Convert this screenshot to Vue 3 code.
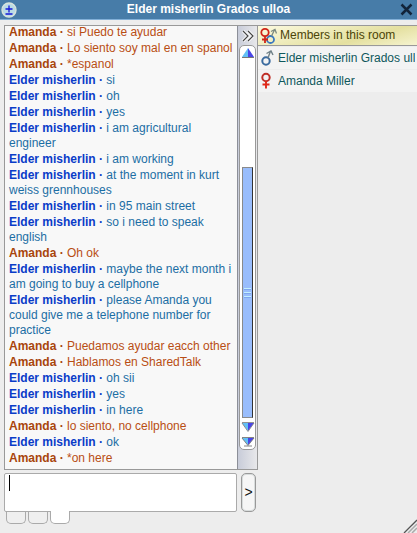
<template>
  <div class="chat-window">
    <header class="title-bar">
      <button class="bar-btn" title="Expand">
        <svg width="16" height="16" viewBox="0 0 16 16">
          <circle cx="8" cy="8" r="7" fill="#b9dbe6" stroke="#d9e4dc" stroke-width="1.4" />
          <path d="M8 3.5v7M4.5 7h7M4.5 12h7" fill="none" stroke="#1418d8" stroke-width="1.3" />
        </svg>
      </button>
      <h1 class="title-text">Elder misherlin Grados ulloa</h1>
      <button class="bar-btn" title="Close">
        <svg width="13" height="13" viewBox="0 0 13 13">
          <path d="M1.5 1.5l10 10M11.5 1.5l-10 10" fill="none" stroke="#12243a" stroke-width="2.5" />
        </svg>
      </button>
    </header>

    <main class="content">
      <section class="chat">
        <div class="log-row">
          <div class="log">
            <p v-for="(m, i) in messages" :key="i" class="message" :class="m.from">
              <b>{{ names[m.from] }} ·</b> {{ m.text }}
            </p>
          </div>
          <div class="rail">
            <button class="collapse-btn" title="Hide members">
              <svg width="12" height="12" viewBox="0 0 12 12">
                <path d="M1 1l5 5-5 5M6 1l5 5-5 5" fill="none" stroke="#fff" stroke-width="3" />
                <path d="M1 1l5 5-5 5M6 1l5 5-5 5" fill="none" stroke="#444" stroke-width="1.2" />
              </svg>
            </button>
            <div class="scrollbar">
              <button class="arrow" title="Up">
                <svg width="14" height="10" viewBox="0 0 14 10">
                  <path d="M7 0L1 9h6z" fill="#62c0f5" />
                  <path d="M7 0l6 9H7z" fill="#4a46e6" />
                  <path d="M1 9.5h12" stroke="#777" />
                </svg>
              </button>
              <div class="track">
                <div class="thumb"><i></i><i></i><i></i></div>
              </div>
              <button class="arrow" title="Down">
                <svg width="14" height="10" viewBox="0 0 14 10">
                  <path d="M1 1h6v8z" fill="#62c0f5" />
                  <path d="M7 1h6L7 9z" fill="#4a46e6" />
                  <path d="M1 .5h12M1 1l6 8.5L13 1" fill="none" stroke="#777" stroke-width=".8" />
                </svg>
              </button>
              <button class="arrow end" title="Bottom">
                <svg width="14" height="10" viewBox="0 0 14 10">
                  <path d="M1 1h6v7z" fill="#62c0f5" />
                  <path d="M7 1h6L7 8z" fill="#4a46e6" />
                  <path d="M1 .5h12M1 1l6 7.5L13 1M3 9h8" fill="none" stroke="#666" stroke-width=".8" />
                </svg>
              </button>
            </div>
          </div>
        </div>

        <form class="compose" @submit.prevent="send">
          <textarea
            v-model="draft"
            class="input"
            :class="{ empty: !draft }"
            aria-label="Message"
          ></textarea>
          <button class="send-btn" title="Send">&gt;</button>
        </form>
        <div class="tabs">
          <button
            v-for="n in 3"
            :key="n"
            class="tab"
            :class="{ active: n === tab }"
            :aria-label="'Tab ' + n"
            @click="tab = n"
          ></button>
        </div>
      </section>

      <aside class="members">
        <h2 class="members-title">
          <svg width="18" height="18" viewBox="0 0 18 18" fill="none">
            <g stroke="#3a78c0" stroke-width="1.8">
              <circle cx="11.5" cy="12.5" r="3.5" />
              <path d="M12.5 9l3-6M12 4.5l4-2 1.500 4" stroke="#7c8a80" stroke-width="1.3" />
            </g>
            <g stroke="#d02418" stroke-width="1.8">
              <circle cx="6" cy="5.5" r="3.7" />
              <path d="M6 9.2V16M3 12.5h6" />
            </g>
          </svg>
          Members in this room
        </h2>
        <ul class="member-list">
          <li v-for="m in members" :key="m.name" class="member">
            <svg v-if="m.male" width="16" height="18" viewBox="0 0 16 18" fill="none">
              <circle cx="6" cy="12" r="3.7" stroke="#3a6a9e" stroke-width="2" />
              <path d="M8 9l2.500-7M6.500 4.500L11 2l2 4" stroke="#6f8087" stroke-width="1.4" />
            </svg>
            <svg v-else width="16" height="18" viewBox="0 0 16 18" fill="none">
              <circle cx="6" cy="5.5" r="3.7" stroke="#c03028" stroke-width="2" />
              <path d="M6 9v7.500M2.500 12.500h7" stroke="#e02818" stroke-width="1.9" />
            </svg>
            <span class="member-name">{{ m.name }}</span>
          </li>
        </ul>
      </aside>
    </main>

    <svg class="grip" width="14" height="14" viewBox="0 0 14 14" fill="none">
      <path d="M1 14L14 1" stroke="#555" stroke-width="1.3" />
      <path d="M5 14l9-9M9 14l5-5" stroke="#aaa" stroke-width="1.5" />
    </svg>
  </div>
</template>

<script setup>
import { ref } from 'vue';

const names = { amanda: 'Amanda', elder: 'Elder misherlin' };

const messages = ref([
  { from: 'amanda', text: 'si Puedo te ayudar' },
  { from: 'amanda', text: 'Lo siento soy mal en en spanol' },
  { from: 'amanda', text: '*espanol' },
  { from: 'elder', text: 'si' },
  { from: 'elder', text: 'oh' },
  { from: 'elder', text: 'yes' },
  { from: 'elder', text: 'i am agricultural engineer' },
  { from: 'elder', text: 'i am working' },
  { from: 'elder', text: 'at the moment in kurt weiss grennhouses' },
  { from: 'elder', text: 'in 95 main street' },
  { from: 'elder', text: 'so i need to speak english' },
  { from: 'amanda', text: 'Oh ok' },
  { from: 'elder', text: 'maybe the next month i am going to buy a cellphone' },
  { from: 'elder', text: 'please Amanda you could give me a telephone number for practice' },
  { from: 'amanda', text: 'Puedamos ayudar eacch other' },
  { from: 'amanda', text: 'Hablamos en SharedTalk' },
  { from: 'elder', text: 'oh sii' },
  { from: 'elder', text: 'yes' },
  { from: 'elder', text: 'in here' },
  { from: 'amanda', text: 'lo siento, no cellphone' },
  { from: 'elder', text: 'ok' },
  { from: 'amanda', text: '*on here' },
]);

const members = [
  { name: 'Elder misherlin Grados ulloa', male: true },
  { name: 'Amanda Miller', male: false },
];

const draft = ref('');
const tab = ref(3);

const send = () => {
  if (!draft.value.trim()) return;
  messages.value.push({ from: 'amanda', text: draft.value });
  draft.value = '';
};
</script>

<style>
body {
  margin: 0;
  background: #ededed;
}
</style>

<style scoped>
.chat-window {
  position: relative;
  display: flex;
  flex-direction: column;
  height: 100vh;
  overflow: hidden;
  background: #ededed;
  font: 12px/15px "Liberation Sans", Arial, sans-serif;
}

button {
  padding: 0;
  border: none;
  background: none;
  font: inherit;
}

svg {
  display: block;
  flex: none;
}

.title-bar {
  display: flex;
  align-items: center;
  height: 19px;
  flex: none;
  padding: 0 4px 0 1px;
  background: #477ca8;
  border-bottom: 1px solid #82b0d8;
}

.bar-btn {
  flex: none;
}

.title-text {
  flex: 1;
  margin: 0;
  font-size: 12px;
  line-height: 17px;
  text-align: center;
  color: #fff;
}

.content {
  display: flex;
  flex: 1;
  min-height: 0;
  padding: 5px 0 9px 4px;
}

.chat {
  display: flex;
  flex-direction: column;
  flex: 0 0 254px;
}

.log-row {
  display: flex;
  flex: 1;
  min-height: 0;
  border: 1px solid #999;
}

.log {
  display: flex;
  flex: 1;
  flex-direction: column;
  justify-content: flex-end;
  overflow: hidden;
  padding: 0 2px 2px 4px;
  background: #f8f8f8;
}

.message {
  flex: none;
  margin: 0 0 1px;
}

.amanda {
  color: #b84e14;
}

.amanda b {
  color: #a8450c;
}

.elder {
  color: #1c6ea4;
}

.elder b {
  color: #0a3cc8;
}

.rail {
  display: flex;
  flex-direction: column;
  flex: 0 0 20px;
  box-sizing: border-box;
  padding-bottom: 19px;
  border-left: 1px solid #8c8f98;
  background: linear-gradient(90deg, #c8ccd9, #e8e8ea);
}

.collapse-btn {
  display: flex;
  align-items: center;
  justify-content: center;
  height: 19px;
}

.scrollbar {
  display: flex;
  flex: 1;
  flex-direction: column;
  align-items: center;
  margin: 0 1px;
  border: 1px solid #999;
  border-radius: 5px;
  background: #fff;
}

.arrow {
  height: 14px;
  padding: 2px 0;
}

.arrow.end {
  height: 15px;
}

.track {
  display: flex;
  flex: 1;
  flex-direction: column;
  justify-content: flex-end;
  padding-bottom: 2px;
}

.thumb {
  display: flex;
  flex-direction: column;
  align-items: center;
  justify-content: center;
  gap: 2px;
  box-sizing: border-box;
  width: 11px;
  height: 70%;
  border: 1px solid #8a8a8a;
  border-right-color: #333;
  background: #99bdfc;
}

.thumb i {
  width: 7px;
  height: 1px;
  border-bottom: 1px solid #7fa6ee;
  background: #c4f0ff;
}

.compose {
  display: flex;
  gap: 4px;
  height: 39px;
  margin-top: 3px;
}

.input {
  flex: 1;
  min-width: 0;
  box-sizing: border-box;
  padding: 2px 4px;
  border: 1px solid #aaa;
  border-radius: 2px;
  outline: none;
  resize: none;
  background: #fff;
  font: inherit;
}

/* steady cursor while nothing has been typed */
.input.empty {
  caret-color: transparent;
  background: linear-gradient(#000, #000) 4px 1px / 1px 16px no-repeat #fff;
}

.send-btn {
  width: 15px;
  margin-right: 2px;
  border: 1px solid #999;
  border-radius: 5px;
  background: #f6f6f6;
  box-shadow: inset 0 0 0 1px #d8dcdc;
  font-size: 14px;
  color: #111;
}

.tabs {
  display: flex;
  gap: 2px;
  padding-left: 2px;
}

.tab {
  width: 20px;
  height: 12px;
  border: 1px solid #aaa;
  border-top: none;
  border-radius: 0 0 5px 5px;
  background: #efefef;
}

.tab.active {
  margin-top: -1px;
  height: 13px;
  background: #fff;
  z-index: 1;
}

.members {
  flex: 1;
  min-width: 0;
}

.members-title {
  display: flex;
  align-items: center;
  gap: 3px;
  height: 19px;
  margin: 0;
  padding-left: 1px;
  border: solid #999;
  border-width: 1px 0;
  background: linear-gradient(165deg, #fcfae0, #e4e0a0 65%, #f6f4d0);
  font-size: 12px;
  line-height: 17px;
  font-weight: normal;
  color: #4c4408;
}

.member-list {
  margin: 0;
  padding: 1px 0 0;
  list-style: none;
}

.member {
  display: flex;
  align-items: center;
  gap: 2px;
  height: 22px;
  margin-bottom: 1px;
  padding: 0 2px;
  background: #f3f3f3;
  color: #0f585c;
}

.member-name {
  overflow: hidden;
  white-space: nowrap;
}

.grip {
  position: absolute;
  right: 0;
  bottom: 0;
}
</style>
